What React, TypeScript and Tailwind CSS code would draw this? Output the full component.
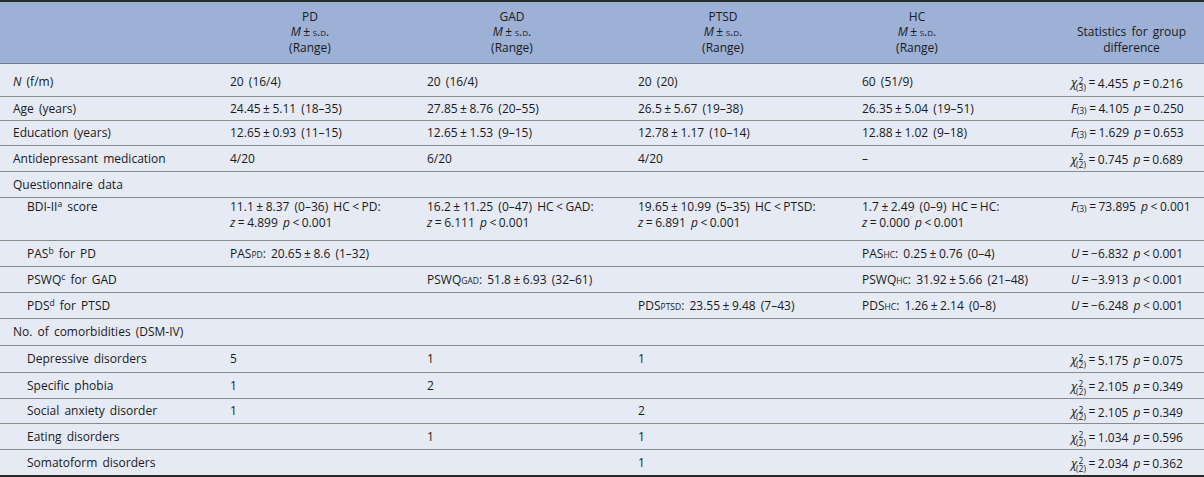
import React from "react";

function Op({ c }: { c: string }) {
  return <span className="mx-[2.5px]">{c}</span>;
}

function Chi({ df }: { df: string }) {
  return (
    <span className="inline-flex items-end">
      <span className="italic">χ</span>
      <span className="whitespace-pre-line text-[8.5px] leading-[7.5px] -ml-[1px] relative top-[2px] inline-block text-center">
        {`2\n(${df})`}
      </span>
    </span>
  );
}

function Stat({ pre, val, op, p }: { pre: React.ReactNode; val: string; op: string; p: string }) {
  return (
    <span className="whitespace-nowrap">
      {pre}
      <Op c="=" />
      {val} <i>p</i>
      <Op c={op} />
      {p}
    </span>
  );
}

function F3() {
  return (
    <span>
      <i>F</i>
      <sub className="text-[8.5px] relative top-[1px]">(3)</sub>
    </span>
  );
}

function Sub({ a, b }: { a: string; b: string }) {
  return (
    <span>
      {a}
      <sub className="text-[8.5px] relative top-[0px]">{b}</sub>
    </span>
  );
}

function pm(a: string, b: string, r: string) {
  return (
    <span>
      {a}
      <Op c="±" />
      {b} ({r})
    </span>
  );
}

type Row = {
  label: React.ReactNode;
  indent?: boolean;
  cells: React.ReactNode[];
  stat?: React.ReactNode;
  h: number;
  cls?: string;
  top?: boolean;
};

function Z({ z }: { z: string }) {
  return (
    <span>
      <i>z</i>
      <Op c="=" />
      {z} <i>p</i>
      <Op c="<" />
      0.001
    </span>
  );
}

function Two({ a, b }: { a: React.ReactNode; b: React.ReactNode }) {
  return (
    <div className="flex flex-col leading-[16px]">
      <div>{a}</div>
      <div>{b}</div>
    </div>
  );
}

const rows: Row[] = [
  {
    label: (
      <span>
        <i>N</i> (f/m)
      </span>
    ),
    cells: ["20 (16/4)", "20 (16/4)", "20 (20)", "60 (51/9)"],
    stat: <Stat pre={<Chi df="3" />} val="4.455" op="=" p="0.216" />,
    h: 33,
    cls: "pt-[4px]",
  },
  {
    label: "Age (years)",
    cells: [pm("24.45", "5.11", "18–35"), pm("27.85", "8.76", "20–55"), pm("26.5", "5.67", "19–38"), pm("26.35", "5.04", "19–51")],
    stat: <Stat pre={<F3 />} val="4.105" op="=" p="0.250" />,
    h: 24,
  },
  {
    label: "Education (years)",
    cells: [pm("12.65", "0.93", "11–15"), pm("12.65", "1.53", "9–15"), pm("12.78", "1.17", "10–14"), pm("12.88", "1.02", "9–18")],
    stat: <Stat pre={<F3 />} val="1.629" op="=" p="0.653" />,
    h: 25,
  },
  {
    label: "Antidepressant medication",
    cells: ["4/20", "6/20", "4/20", "–"],
    stat: <Stat pre={<Chi df="2" />} val="0.745" op="=" p="0.689" />,
    h: 26,
  },
  { label: "Questionnaire data", cells: ["", "", "", ""], h: 26 },
  {
    label: (
      <span>
        BDI-II<sup className="text-[8.5px]">a</sup> score
      </span>
    ),
    indent: true,
    top: true,
    cells: [
      <Two
        a={
          <>
            {pm("11.1", "8.37", "0–36")} HC<Op c="<" />PD:
          </>
        }
        b={<Z z="4.899" />}
      />,
      <Two
        a={
          <>
            {pm("16.2", "11.25", "0–47")} HC<Op c="<" />GAD:
          </>
        }
        b={<Z z="6.111" />}
      />,
      <Two
        a={
          <>
            {pm("19.65", "10.99", "5–35")} HC<Op c="<" />PTSD:
          </>
        }
        b={<Z z="6.891" />}
      />,
      <Two
        a={
          <>
            {pm("1.7", "2.49", "0–9")} HC<Op c="=" />HC:
          </>
        }
        b={<Z z="0.000" />}
      />,
    ],
    stat: <Stat pre={<F3 />} val="73.895" op="<" p="0.001" />,
    h: 43,
  },
  {
    label: (
      <span>
        PAS<sup className="text-[8.5px]">b</sup> for PD
      </span>
    ),
    indent: true,
    cells: [
      <span>
        <Sub a="PAS" b="PD" />: {pm("20.65", "8.6", "1–32")}
      </span>,
      "",
      "",
      <span>
        <Sub a="PAS" b="HC" />: {pm("0.25", "0.76", "0–4")}
      </span>,
    ],
    stat: <Stat pre={<i>U</i>} val="−6.832" op="<" p="0.001" />,
    h: 26,
  },
  {
    label: (
      <span>
        PSWQ<sup className="text-[8.5px]">c</sup> for GAD
      </span>
    ),
    indent: true,
    cells: [
      "",
      <span>
        <Sub a="PSWQ" b="GAD" />: {pm("51.8", "6.93", "32–61")}
      </span>,
      "",
      <span>
        <Sub a="PSWQ" b="HC" />: {pm("31.92", "5.66", "21–48")}
      </span>,
    ],
    stat: <Stat pre={<i>U</i>} val="−3.913" op="<" p="0.001" />,
    h: 26,
  },
  {
    label: (
      <span>
        PDS<sup className="text-[8.5px]">d</sup> for PTSD
      </span>
    ),
    indent: true,
    cells: [
      "",
      "",
      <span>
        <Sub a="PDS" b="PTSD" />: {pm("23.55", "9.48", "7–43")}
      </span>,
      <span>
        <Sub a="PDS" b="HC" />: {pm("1.26", "2.14", "0–8")}
      </span>,
    ],
    stat: <Stat pre={<i>U</i>} val="−6.248" op="<" p="0.001" />,
    h: 26,
  },
  { label: "No. of comorbidities (DSM-IV)", cells: ["", "", "", ""], h: 27 },
  {
    label: "Depressive disorders",
    indent: true,
    cells: ["5", "1", "1", ""],
    stat: <Stat pre={<Chi df="2" />} val="5.175" op="=" p="0.075" />,
    h: 27,
  },
  {
    label: "Specific phobia",
    indent: true,
    cells: ["1", "2", "", ""],
    stat: <Stat pre={<Chi df="2" />} val="2.105" op="=" p="0.349" />,
    h: 26,
  },
  {
    label: "Social anxiety disorder",
    indent: true,
    cells: ["1", "", "2", ""],
    stat: <Stat pre={<Chi df="2" />} val="2.105" op="=" p="0.349" />,
    h: 25,
  },
  {
    label: "Eating disorders",
    indent: true,
    cells: ["", "1", "1", ""],
    stat: <Stat pre={<Chi df="2" />} val="1.034" op="=" p="0.596" />,
    h: 26,
  },
  {
    label: "Somatoform disorders",
    indent: true,
    cells: ["", "", "1", ""],
    stat: <Stat pre={<Chi df="2" />} val="2.034" op="=" p="0.362" />,
    h: 25,
  },
];

const headW = [184, 194, 194, 134, 148];
const GRID = "grid grid-cols-[218px_197px_211px_224px_209px_145px]";

function Head({ name, w }: { name: string; w: number }) {
  return (
    <div className="flex flex-col items-center leading-[15.5px]" style={{ width: w }}>
      <span>{name}</span>
      <span>
        <i>M</i>
        <Op c="±" />
        <span className="[font-variant:small-caps]">s.d.</span>
      </span>
      <span>(Range)</span>
    </div>
  );
}

export default function App() {
  return (
    <div className="w-[1204px] h-[477px] bg-[#e6eaf5] text-[#1a1a1a] font-['Open_Sans',sans-serif] text-[12px] [word-spacing:2px] overflow-hidden border-t-2 border-b-2 border-[#2a2a2a]">
      <div className={`${GRID} h-[62px] bg-[#9db0d6] border-b border-[#6f7a90]`}>
        <div />
        {["PD", "GAD", "PTSD", "HC"].map((n, i) => (
          <div key={n} className="flex items-end pb-[8px]">
            <Head name={n} w={headW[i]} />
          </div>
        ))}
        <div className="flex items-end pb-[8px]">
          <div className="flex flex-col items-center leading-[15.5px]" style={{ width: headW[4] }}>
            <span>Statistics for group</span>
            <span>difference</span>
          </div>
        </div>
      </div>
      {rows.map((r, ri) => {
        const cell = `${r.top ? "items-start pt-[1px]" : "items-center"} ${r.cls ?? ""} flex leading-[13.5px] whitespace-nowrap`;
        return (
          <div
            key={ri}
            className={`${GRID} ${ri === rows.length - 1 ? "" : "border-b border-[#8a8a8a]"}`}
            style={{ height: r.h }}
          >
            <div className={`${cell} ${r.indent ? "pl-[27px]" : "pl-[13px]"} ${r.top ? "pt-[2px]" : ""}`}>{r.label}</div>
            {r.cells.map((c, ci) => (
              <div key={ci} className={`${cell} pl-[12px]`}>
                <div>{c}</div>
              </div>
            ))}
            <div className={`${cell} pl-[12px] ${r.top ? "pt-[2px]" : ""}`}>{r.stat}</div>
          </div>
        );
      })}
    </div>
  );
}
